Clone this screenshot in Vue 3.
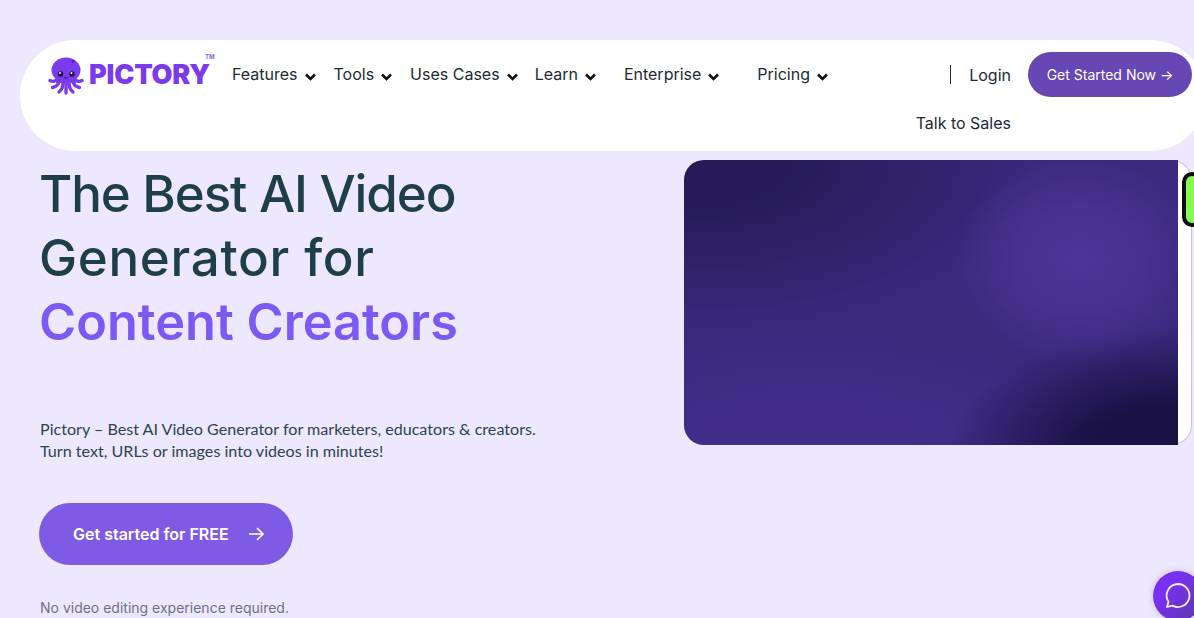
<script setup>
const menu = [
  { label: 'Features', gap: 'g18' },
  { label: 'Tools', gap: 'g18' },
  { label: 'Uses Cases', gap: 'g17' },
  { label: 'Learn', gap: 'g28' },
  { label: 'Enterprise', gap: 'g38' },
  { label: 'Pricing', gap: '' },
]
</script>

<template>
  <div class="page">
    <header class="navbar">
      <a class="logo">
        <svg class="octopus" width="36" height="38" viewBox="0 0 36 38">
          <ellipse cx="18" cy="13" rx="14.500" ry="12.500" fill="#7c3aed"/>
          <path d="M8 19c0 5 20 5 20 0v7H8z" fill="#7c3aed"/>
          <g fill="none" stroke="#7c3aed" stroke-width="3.400" stroke-linecap="round">
            <path d="M9 22c-1.500 2.500-4.500 3-7 1.500"/>
            <path d="M11 25c-1 3-3.500 5-6.500 5.500"/>
            <path d="M15 26c0 4-1.500 7-4 9"/>
            <path d="M18 26v10"/>
            <path d="M21 26c0 4 1.500 7 4 9"/>
            <path d="M25 25c1 3 3.500 5 6.500 5.500"/>
            <path d="M27 22c1.500 2.500 4.500 3 7 1.500"/>
          </g>
          <circle cx="25" cy="4.500" r="1.500" fill="#5b21b6"/>
          <circle cx="12.500" cy="17" r="2.700" fill="#1f1147"/>
          <circle cx="24" cy="17" r="2.700" fill="#1f1147"/>
          <circle cx="12" cy="16" r=".9" fill="#fff"/>
          <circle cx="23.500" cy="16" r=".9" fill="#fff"/>
          <path d="M16 20.500q2 1.500 4 0" fill="none" stroke="#1f1147" stroke-width=".8"/>
        </svg>
        <span class="wordmark">PICTORY</span>
        <span class="tm">TM</span>
      </a>

      <nav class="menu">
        <a v-for="item in menu" :key="item.label" class="menu-item" :class="item.gap">
          {{ item.label }}
          <svg class="chevron" width="11" height="8" viewBox="0 0 11 8">
            <path d="M1 1.500l4.500 4.500 4.500-4.500" fill="none" stroke="#111" stroke-width="2.600"/>
          </svg>
        </a>
      </nav>

      <div class="side">
        <div class="login"><i class="divider"></i><a>Login</a></div>
        <a class="cta">Get Started Now →</a>
        <a class="sales">Talk to Sales</a>
      </div>
    </header>

    <main class="hero">
      <section class="copy">
        <h1>
          <span class="line-one">The Best AI Video</span>
          <span class="line-two">Generator for</span>
          <em>Content Creators</em>
        </h1>
        <p class="lead">Pictory – Best AI Video Generator for marketers, educators &amp; creators.<br>Turn text, URLs or images into videos in minutes!</p>
        <a class="start">
          Get started for FREE
          <svg width="16" height="14" viewBox="0 0 16 14">
            <path d="M1 7h14M9 1l6 6-6 6" fill="none" stroke="#fff" stroke-width="1.600"/>
          </svg>
        </a>
        <p class="note">No video editing experience required.</p>
      </section>

      <section class="media">
        <div class="video"></div>
        <div class="sticker"></div>
      </section>
    </main>

    <button class="chat">
      <svg width="30" height="30" viewBox="0 0 30 30">
        <path d="M15 3a11.500 11.500 0 1 1-5.500 21.600L4 26l1.500-5.200A11.500 11.500 0 0 1 15 3z" fill="none" stroke="#f3edff" stroke-width="1.800" stroke-linejoin="round"/>
      </svg>
    </button>
  </div>
</template>

<style>
html, body {
  margin: 0;
  overflow: hidden;
}
</style>

<style scoped>
.page {
  position: relative;
  width: 1194px;
  height: 618px;
  overflow: hidden;
  padding-top: 40px;
  box-sizing: border-box;
  background: #eee8fe;
  font-family: Inter, "Liberation Sans", sans-serif;
  color: #1c2b33;
}

.navbar {
  display: flex;
  align-items: flex-start;
  width: 1186px;
  height: 111px;
  margin-left: 20px;
  padding: 12px 14px 0 28px;
  box-sizing: border-box;
  background: #fff;
  border-radius: 56px;
}

.logo {
  position: relative;
  display: flex;
  align-items: center;
  width: 184px;
  height: 44px;
  flex: none;
}

.octopus {
  flex: none;
  margin-top: 3px;
  margin-right: 5px;
}

.wordmark {
  margin-top: 1px;
  font-size: 27px;
  line-height: 24px;
  font-weight: 900;
  letter-spacing: -0.2px;
  color: #7c3aed;
}

.tm {
  position: absolute;
  left: 157px;
  top: 2px;
  font-size: 6px;
  line-height: 6px;
  font-weight: 700;
  color: #8b5cf6;
}

.menu {
  display: flex;
  height: 44px;
  align-items: center;
}

.menu-item {
  display: flex;
  align-items: center;
  font-size: 16px;
  white-space: nowrap;
}

.chevron {
  margin: 6px 0 0 7px;
}

.g17 { margin-right: 17px; }
.g18 { margin-right: 18px; }
.g28 { margin-right: 28px; }
.g38 { margin-right: 38px; }

.side {
  display: grid;
  grid-template-columns: auto 164px;
  column-gap: 17px;
  row-gap: 17px;
  margin-left: auto;
  align-items: center;
  justify-items: end;
  font-size: 16px;
}

.login {
  display: flex;
  align-items: center;
  gap: 18px;
}

.divider {
  width: 1.500px;
  height: 19px;
  background: #1c2b33;
}

.cta {
  display: flex;
  align-items: center;
  justify-content: center;
  width: 164px;
  height: 45px;
  border-radius: 23px;
  background: #6747b4;
  color: #fff;
  font-size: 14px;
}

.sales {
  grid-column: 1;
  line-height: 19px;
}

.hero {
  display: flex;
  justify-content: space-between;
  margin-top: 9px;
  padding: 0 2px 0 40px;
}

h1 {
  margin: 0;
  padding-top: 2px;
  font-size: 51px;
  font-weight: 500;
  line-height: 64px;
  color: #1f3f48;
}

h1 span,
h1 em {
  display: block;
  margin-left: -1px;
}

.line-one {
  letter-spacing: -1.050px;
}

.line-two {
  letter-spacing: 0.700px;
}

h1 em {
  font-style: normal;
  font-size: 50.500px;
  font-weight: 600;
  color: #7a5af2;
}

.lead {
  margin: 64px 0 0;
  font-family: Lato, sans-serif;
  font-size: 16.120px;
  line-height: 22px;
  color: #2c4450;
}

.start {
  display: flex;
  align-items: center;
  gap: 19px;
  width: 254px;
  height: 62px;
  margin: 41px 0 0 -1px;
  padding-left: 34px;
  box-sizing: border-box;
  border-radius: 31px;
  background: #7f5ae5;
  color: #fff;
  font-size: 16px;
  font-weight: 600;
}

.note {
  margin: 34px 0 0;
  font-size: 14px;
  line-height: 18px;
  color: #6d7380;
}

.media {
  position: relative;
  width: 508px;
  height: 285px;
  box-sizing: border-box;
  border-radius: 20px;
  background: #fff;
  box-shadow: inset 0 0 0 1px #c9c2dc;
}

.video {
  width: 494px;
  height: 100%;
  border-radius: 20px 0 0 20px;
  background:
    radial-gradient(ellipse 125px 105px at 80% 35%, #4b3597 0%, #463290 50%, rgba(70, 50, 144, 0) 100%),
    radial-gradient(ellipse 230px 130px at 100% 104%, #1a1145 40%, rgba(26, 17, 69, 0) 100%),
    radial-gradient(ellipse 300px 110px at 25% 100%, #402e8a 30%, rgba(64, 46, 138, 0) 100%),
    radial-gradient(ellipse 340px 175px at 4% 0%, #261b58 25%, rgba(38, 27, 88, 0) 100%),
    #3a2a7e;
}

.sticker {
  position: absolute;
  top: 12px;
  left: 498px;
  width: 20px;
  height: 55px;
  box-sizing: border-box;
  border: 4px solid #0c0c0c;
  border-radius: 10px;
  background: #86fb4e;
}

.chat {
  position: absolute;
  left: 1153px;
  top: 571px;
  display: flex;
  align-items: center;
  justify-content: center;
  width: 50px;
  height: 50px;
  padding: 0;
  border: none;
  border-radius: 50%;
  background: linear-gradient(135deg, #7b2ff2 30%, #5a3aa8 100%);
  box-shadow: 0 0 6px rgba(80, 50, 160, 0.25);
}
</style>
